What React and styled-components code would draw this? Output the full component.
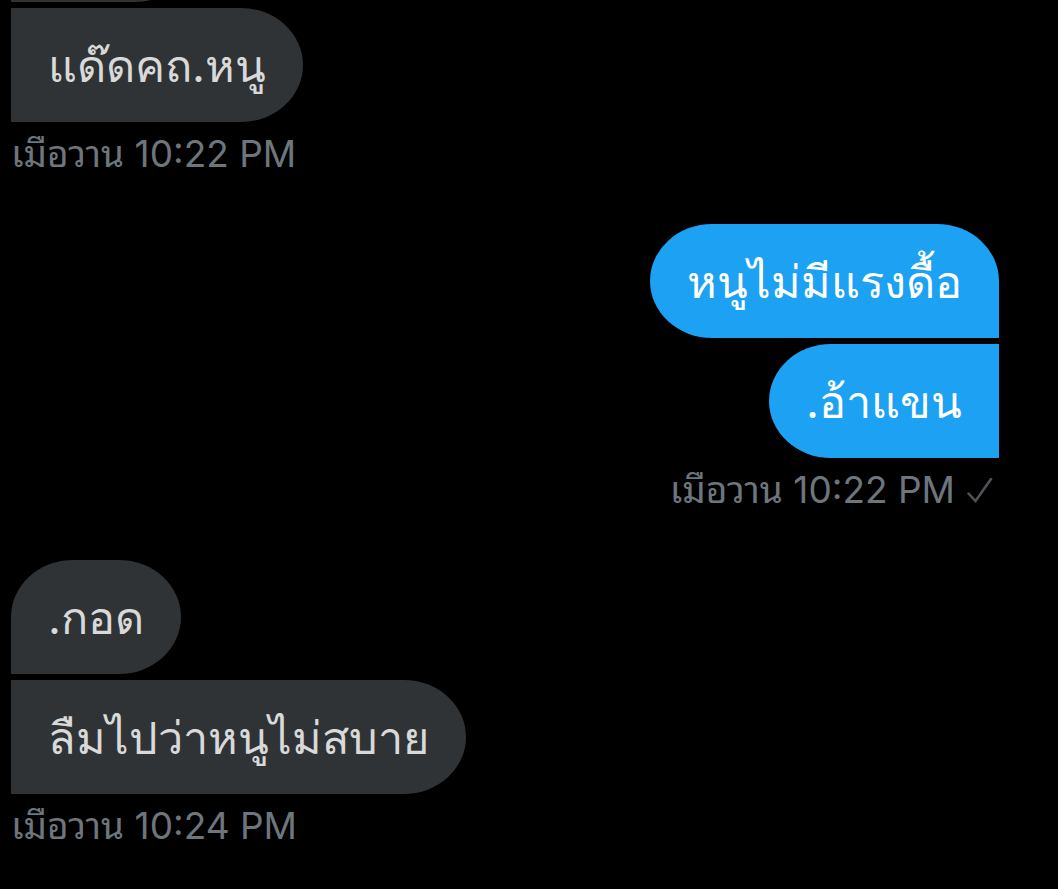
import React from "react";
import styled, { createGlobalStyle, css } from "styled-components";

const thread = [
  {
    side: "left",
    bubbles: ["", "แด๊ดคถ.หนู"],
    time: "เมือวาน 10:22 PM",
    continued: true,
  },
  {
    side: "right",
    bubbles: ["หนูไม่มีแรงดื้อ", ".อ้าแขน"],
    time: "เมือวาน 10:22 PM",
    sent: true,
  },
  {
    side: "left",
    bubbles: [".กอด", "ลืมไปว่าหนูไม่สบาย"],
    time: "เมือวาน 10:24 PM",
  },
];

const App = () => {
  return (
    <>
      <GlobalStyle />
      <Thread>
        {thread.map((group, i) => (
          <Group key={i} $side={group.side}>
            {group.bubbles.map((text, j) => (
              <Bubble
                key={j}
                $side={group.side}
                $first={j === 0 && !group.continued}
              >
                {text}
              </Bubble>
            ))}
            <Meta>
              <Time>{group.time}</Time>
              {group.sent && (
                <Check viewBox="0 0 26 26" role="img" aria-label="sent">
                  <path d="M1.5 16.5 L8.5 24 L24 2" />
                </Check>
              )}
            </Meta>
          </Group>
        ))}
      </Thread>
    </>
  );
};

const GlobalStyle = createGlobalStyle`
  body {
    margin: 0;
    background: #000;
    font-family: Inter, Thonburi, sans-serif;
  }
`;

// pinned to the newest message, older ones run off the top
const Thread = styled.main`
  display: flex;
  flex-direction: column;
  justify-content: flex-end;
  gap: 44px;
  box-sizing: border-box;
  height: 100vh;
  padding: 0 59px 37px 11px;
  overflow: hidden;
`;

const Group = styled.section`
  display: flex;
  flex-direction: column;
  flex-shrink: 0;
  gap: 6px;
  align-items: ${(p) => (p.$side === "right" ? "flex-end" : "flex-start")};
`;

const leftBubble = css`
  color: #d9d9d9;
  background: #2f3336;
  border-radius: ${(p) => (p.$first ? "62px" : "0")} 62px 62px 0 / 57px;
`;

const rightBubble = css`
  color: #fff;
  background: #1da1f2;
  border-radius: 62px ${(p) => (p.$first ? "62px" : "0")} 0 62px / 57px;
`;

const Bubble = styled.div`
  box-sizing: border-box;
  height: 114px;
  padding: 0 37px;
  font-size: 45px;
  line-height: 116px;
  white-space: nowrap;
  ${(p) => (p.$side === "right" ? rightBubble : leftBubble)}

  &:empty {
    width: 186px;
  }
`;

const Meta = styled.div`
  display: flex;
  align-items: center;
  gap: 12px;
  height: 52px;
`;

const Time = styled.time`
  color: #6e767d;
  font-family: Inter, "Noto Sans Thai Looped", "Noto Looped Thai", Loma, sans-serif;
  font-size: 37px;
  line-height: 52px;
  white-space: nowrap;
`;

const Check = styled.svg`
  width: 26px;
  height: 26px;
  margin-right: 6px;
  fill: none;
  stroke: #505458;
  stroke-width: 2.5;
  stroke-linecap: round;
`;

export default App;
